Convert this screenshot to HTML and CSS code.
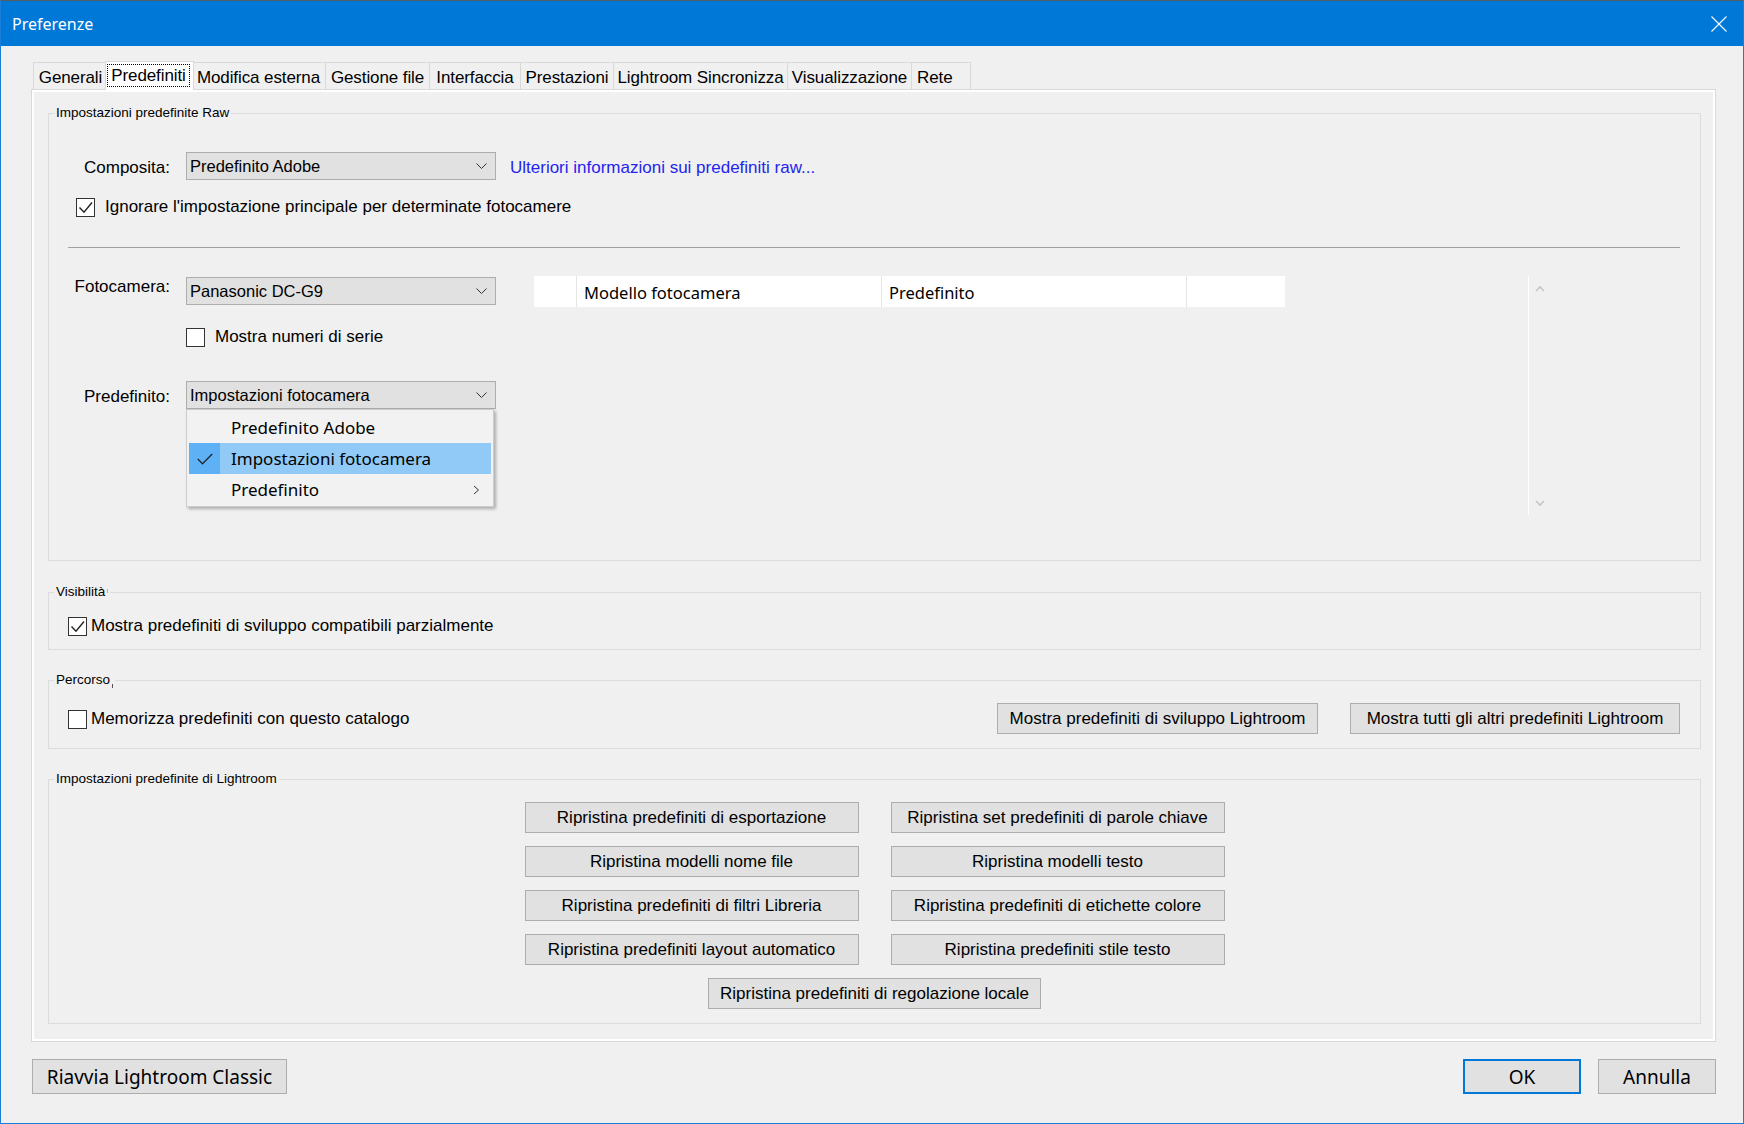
FILE: index.html
```html
<!DOCTYPE html>
<html lang="it">
<head>
<meta charset="utf-8">
<title>Preferenze</title>
<link rel="stylesheet" href="styles.css">
</head>
<body>
<div class="window">
  <div class="titlebar">
    <span class="title">Preferenze</span>
    <svg class="close" width="16" height="16" viewBox="0 0 16 16"><path d="M0.5 0.5 L15.5 15.5 M15.5 0.5 L0.5 15.5" stroke="#ffffff" stroke-width="1.1" fill="none"/></svg>
  </div>
  <div class="client">
    <div class="tabs">
      <div class="tab t-gen">Generali</div>
      <div class="tab sel t-pre"><span class="focus">Predefiniti</span></div>
      <div class="tab t-mod">Modifica esterna</div>
      <div class="tab t-ges">Gestione file</div>
      <div class="tab t-int">Interfaccia</div>
      <div class="tab t-pres">Prestazioni</div>
      <div class="tab t-lr">Lightroom Sincronizza</div>
      <div class="tab t-vis">Visualizzazione</div>
      <div class="tab t-rete">Rete</div>
    </div>
    <div class="panel">
      <fieldset class="group g-raw">
        <legend>Impostazioni predefinite Raw</legend>
        <div class="row row-comp">
          <span class="label lbl-down">Composita:</span>
          <div class="combo"><span>Predefinito Adobe</span><svg width="11" height="6" viewBox="0 0 11 6"><polyline points="0.5,0.5 5.5,5.5 10.5,0.5" fill="none" stroke="#333" stroke-width="1"/></svg></div>
          <a class="link" href="#">Ulteriori informazioni sui predefiniti raw...</a>
        </div>
        <label class="check chk-ign">
          <span class="box"><svg width="17" height="17" viewBox="0 0 17 17"><polyline points="2.5,8.5 7,13.2 15,3.5" fill="none" stroke="#222" stroke-width="1.4"/></svg></span>
          <span class="txt">Ignorare l'impostazione principale per determinate fotocamere</span>
        </label>
        <div class="sep"></div>
        <div class="camera">
          <div class="cam-left">
            <div class="row">
              <span class="label lbl-up">Fotocamera:</span>
              <div class="combo"><span>Panasonic DC-G9</span><svg width="11" height="6" viewBox="0 0 11 6"><polyline points="0.5,0.5 5.5,5.5 10.5,0.5" fill="none" stroke="#333" stroke-width="1"/></svg></div>
            </div>
            <label class="check chk-serial">
              <span class="box"></span>
              <span class="txt">Mostra numeri di serie</span>
            </label>
            <div class="row row-preset">
              <span class="label lbl-down">Predefinito:</span>
              <div class="combo-wrap">
                <div class="combo"><span>Impostazioni fotocamera</span><svg width="11" height="6" viewBox="0 0 11 6"><polyline points="0.5,0.5 5.5,5.5 10.5,0.5" fill="none" stroke="#333" stroke-width="1"/></svg></div>
                <div class="menu">
                  <div class="item"><span class="ic"></span><span class="it">Predefinito Adobe</span></div>
                  <div class="item hl"><span class="ic"><svg width="16" height="12" viewBox="0 0 16 12"><polyline points="0.8,6 5.5,10.7 15.2,1" fill="none" stroke="#1f2a36" stroke-width="1.4"/></svg></span><span class="it">Impostazioni fotocamera</span></div>
                  <div class="item"><span class="ic"></span><span class="it">Predefinito</span><svg class="sub" width="7" height="10" viewBox="0 0 7 10"><polyline points="1,1 5.5,5 1,9" fill="none" stroke="#333" stroke-width="1"/></svg></div>
                </div>
              </div>
            </div>
          </div>
          <div class="cam-list">
            <div class="list-head">
              <div class="col c0"></div>
              <div class="col c1">Modello fotocamera</div>
              <div class="col c2">Predefinito</div>
              <div class="col c3"></div>
            </div>
          </div>
          <div class="vscroll">
            <svg width="10" height="7" viewBox="0 0 10 7"><polyline points="1,6 5,2 9,6" fill="none" stroke="#c6c6c6" stroke-width="1.6"/></svg>
            <svg width="10" height="7" viewBox="0 0 10 7"><polyline points="1,1 5,5 9,1" fill="none" stroke="#c6c6c6" stroke-width="1.6"/></svg>
          </div>
        </div>
      </fieldset>

      <fieldset class="group g-vis">
        <legend>Visibilità<span class="tick tick-v"></span></legend>
        <label class="check chk-vis">
          <span class="box"><svg width="17" height="17" viewBox="0 0 17 17"><polyline points="2.5,8.5 7,13.2 15,3.5" fill="none" stroke="#222" stroke-width="1.4"/></svg></span>
          <span class="txt">Mostra predefiniti di sviluppo compatibili parzialmente</span>
        </label>
      </fieldset>

      <fieldset class="group g-path">
        <legend>Percorso<span class="tick tick-p"></span></legend>
        <div class="row row-path">
          <label class="check chk-vis">
            <span class="box"></span>
            <span class="txt">Memorizza predefiniti con questo catalogo</span>
          </label>
          <button class="btn btn-dev">Mostra predefiniti di sviluppo Lightroom</button>
          <button class="btn btn-all">Mostra tutti gli altri predefiniti Lightroom</button>
        </div>
      </fieldset>

      <fieldset class="group g-lr">
        <legend>Impostazioni predefinite di Lightroom</legend>
        <div class="grid">
          <button class="btn">Ripristina predefiniti di esportazione</button>
          <button class="btn">Ripristina set predefiniti di parole chiave</button>
          <button class="btn">Ripristina modelli nome file</button>
          <button class="btn">Ripristina modelli testo</button>
          <button class="btn">Ripristina predefiniti di filtri Libreria</button>
          <button class="btn">Ripristina predefiniti di etichette colore</button>
          <button class="btn">Ripristina predefiniti layout automatico</button>
          <button class="btn">Ripristina predefiniti stile testo</button>
          <button class="btn wide">Ripristina predefiniti di regolazione locale</button>
        </div>
      </fieldset>
    </div>
    <div class="footer">
      <button class="btn fbtn b-restart">Riavvia Lightroom Classic</button>
      <button class="btn fbtn b-ok">OK</button>
      <button class="btn fbtn b-cancel">Annulla</button>
    </div>
  </div>
</div>
</body>
</html>
```
FILE: styles.css
```css
* { box-sizing: border-box; }
html, body { margin: 0; padding: 0; }
body {
  width: 1744px;
  height: 1124px;
  overflow: hidden;
  background: #f0f0f0;
  font-family: "Liberation Sans", Arial, sans-serif;
  font-size: 17px;
  color: #000;
}
.window {
  width: 1744px;
  height: 1124px;
  display: flex;
  flex-direction: column;
  border: 1px solid #1a7fd6;
  border-top-color: #5c5c5c;
  background: #f0f0f0;
}
.titlebar {
  flex: none;
  height: 45px;
  background: #0078d7;
  color: #fff;
  display: flex;
  align-items: center;
  padding: 0 16px 0 11px;
  font-family: "Noto Sans", sans-serif;
  font-size: 16px;
}
.titlebar .close { margin-left: auto; display: block; }

.client {
  flex: 1;
  display: flex;
  flex-direction: column;
  padding: 15px 27px 0 30px;
}

/* tabs */
.tabs {
  flex: none;
  display: flex;
  height: 28px;
  padding-left: 2px;
  position: relative;
  z-index: 2;
}
.tab {
  flex: none;
  height: 27px;
  margin-top: 1px;
  border: 1px solid #d9d9d9;
  border-bottom: 0;
  border-right: 0;
  background: #f0f0f0;
  text-align: center;
  line-height: 23px;
  padding-top: 3px;
  white-space: nowrap;
  letter-spacing: -0.1px;
}
.tab:last-child { border-right: 1px solid #d9d9d9; }
.tab.sel {
  position: relative;
  z-index: 3;
  height: 29px;
  margin-top: 0;
  margin-left: -2px;
  margin-right: -3px;
  border-right: 1px solid #d9d9d9;
  background: #ffffff;
  padding: 2px 3px 3px 1px;
  line-height: normal;
}
.focus {
  display: block;
  height: 23px;
  line-height: 22px;
  border: 1px dotted #000;
}
.t-gen { width: 74px; }
.t-pre { width: 89px; }
.t-mod { width: 134px; }
.t-ges { width: 104px; }
.t-int { width: 91px; }
.t-pres { width: 93px; }
.t-lr { width: 174px; }
.t-vis { width: 124px; }
.t-rete { width: 60px; text-align: left; padding-left: 5px; }

/* panel */
.panel {
  flex: none;
  position: relative;
  z-index: 1;
  width: 1685px;
  height: 953px;
  border: 1px solid #d9d9d9;
  box-shadow: inset 0 0 0 2px #ffffff;
  padding: 14px 14px 0 16px;
  display: flex;
  flex-direction: column;
}
.group {
  flex: none;
  margin: 0;
  padding: 0;
  min-width: 0;
  border: 1px solid #dcdcdc;
}
.group legend {
  margin-left: 5px;
  padding: 0 2px;
  font-size: 13.5px;
  line-height: 18px;
}
.tick {
  display: inline-block;
  width: 1px;
  background: #8a8a8a;
  margin-left: 2px;
}
.tick-v { height: 4px; vertical-align: 3px; background: #b0b0b0; }
.tick-p { height: 4px; vertical-align: -4px; background: #555; }

.g-raw { height: 457px; }
.g-vis { height: 67px; margin-top: 22px; }
.g-path { height: 78px; margin-top: 21px; }
.g-lr { height: 254px; margin-top: 21px; }

.row { display: flex; align-items: center; }
.row-comp { margin-top: 30px; }
.label {
  flex: none;
  width: 121px;
  margin-right: 16px;
  text-align: right;
  white-space: nowrap;
}
.lbl-down { padding-top: 3px; }
.lbl-up { padding-bottom: 8px; }

.combo {
  flex: none;
  width: 310px;
  height: 28px;
  border: 1px solid #adadad;
  background: #e1e1e1;
  display: flex;
  align-items: center;
  justify-content: space-between;
  padding: 0 8px 0 3px;
  font-size: 16.5px;
  white-space: nowrap;
}
.combo svg { display: block; }
.link {
  margin-left: 14px;
  padding-top: 3px;
  color: #2424ee;
  text-decoration: none;
  white-space: nowrap;
}

.check { display: flex; align-items: center; white-space: nowrap; }
.box {
  flex: none;
  width: 19px;
  height: 19px;
  border: 1px solid #333;
  background: #fff;
  display: flex;
}
.box svg { display: block; }
.chk-ign { margin: 17px 0 0 27px; }
.chk-ign .txt { margin-left: 10px; }
.sep {
  height: 1px;
  background: #a0a0a0;
  margin: 30px 20px 0 19px;
}

.camera { display: flex; margin-top: 28px; height: 239px; }
.cam-left { flex: none; width: 447px; padding-top: 1px; }
.chk-serial { margin: 22px 0 0 137px; }
.chk-serial .txt { margin-left: 10px; }
.row-preset { margin-top: 34px; }
.combo-wrap { position: relative; flex: none; }

.menu {
  position: absolute;
  left: 0;
  top: 100%;
  width: 308px;
  height: 98px;
  background: #f2f2f2;
  border: 1px solid #cccccc;
  box-shadow: 2px 2px 3px rgba(0, 0, 0, 0.28);
  padding: 2px 2px 1px;
  z-index: 5;
  font-family: "Noto Sans", sans-serif;
  font-size: 17px;
}
.item { display: flex; align-items: center; height: 31px; }
.item .ic {
  flex: none;
  width: 31px;
  height: 31px;
  display: flex;
  align-items: center;
  justify-content: center;
}
.item .ic svg { display: block; }
.item .it { margin-left: 11px; flex: 1; white-space: nowrap; padding-bottom: 1px; }
.item .sub { margin-right: 11px; display: block; }
.item.hl { background: #91c9f7; }
.item.hl .ic { background: #5fb1f6; }

.cam-list { flex: none; width: 994px; margin-left: 38px; }
.list-head {
  display: flex;
  width: 751px;
  height: 31px;
  background: #fff;
  font-family: "Noto Sans", sans-serif;
  font-size: 16.5px;
}
.col {
  flex: none;
  border-right: 1px solid #e5e5e5;
  padding: 1px 0 0 7px;
  display: flex;
  align-items: center;
  white-space: nowrap;
}
.c0 { width: 43px; }
.c1 { width: 305px; }
.c2 { width: 305px; }
.c3 { width: 98px; border-right: 0; }
.vscroll {
  flex: none;
  width: 24px;
  border-left: 1px solid #ffffff;
  display: flex;
  flex-direction: column;
  justify-content: space-between;
  padding: 9px 0 8px 6px;
}
.vscroll svg { display: block; }

.chk-vis { margin: 15px 0 0 18.5px; }
.chk-vis .txt { margin-left: 4.5px; }
.row-path { margin-top: 14px; height: 31px; padding-right: 20px; }
.row-path .chk-vis { margin-top: 1px; }

.btn {
  flex: none;
  height: 31px;
  margin: 0;
  padding: 0;
  border: 1px solid #adadad;
  background: #e1e1e1;
  color: #000;
  font-family: "Liberation Sans", Arial, sans-serif;
  font-size: 17px;
  display: flex;
  align-items: center;
  justify-content: center;
  white-space: nowrap;
}
.btn-dev { width: 321px; margin-left: auto; }
.btn-all { width: 330px; margin-left: 32px; }

.grid {
  display: grid;
  grid-template-columns: 334px 334px;
  column-gap: 32px;
  row-gap: 13px;
  justify-content: center;
  margin-top: 14px;
}
.grid .btn { width: 100%; }
.grid .wide { grid-column: 1 / span 2; justify-self: center; width: 333px; }

.footer { flex: none; display: flex; margin-top: 17px; height: 35px; }
.fbtn {
  height: 35px;
  font-family: "Noto Sans", sans-serif;
  font-size: 19px;
  padding-top: 1px;
}
.b-restart { width: 255px; margin-left: 1px; }
.b-ok { width: 118px; margin-left: auto; border: 2px solid #0078d7; }
.b-cancel { width: 118px; margin-left: 17px; }
```
